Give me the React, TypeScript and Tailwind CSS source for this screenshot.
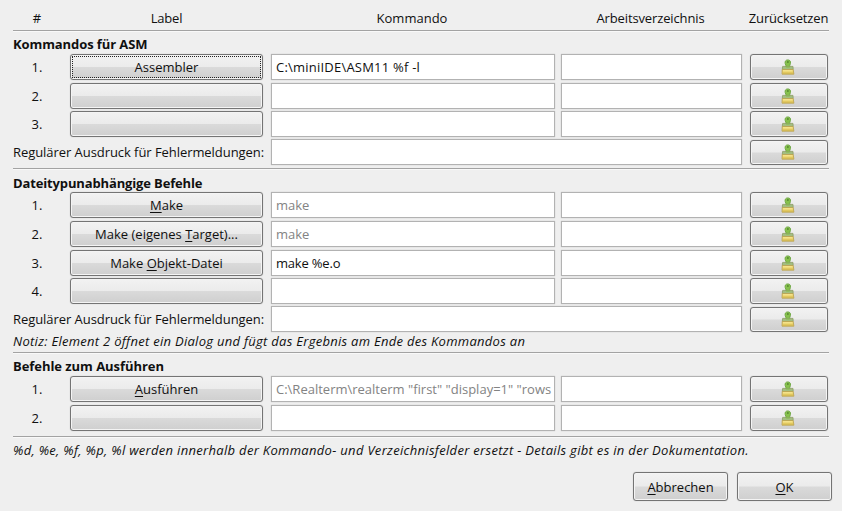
import React from 'react';

const BTN =
  'flex items-center justify-center rounded-[3px] border border-[#747474] bg-[linear-gradient(#f2f2f2_0%,#ebebeb_49%,#dadada_51%,#cfcfcf_100%)] shadow-[inset_0_0_0_1px_#f4f4f4,0_0_1px_#a8a8a8]';
const INPUT =
  'flex items-center overflow-hidden whitespace-nowrap border border-[#b2b2b2] bg-white pl-1 shadow-[0_0_1px_#c4c4c4]';

function Brush() {
  return (
    <svg className="mr-0.5" width="14" height="17" viewBox="0 0 14 17">
      <path d="M4.9 8.4V6.6L4.2 4.6C3.6 2.2 4.9 .9 6.8 .9S10 2.2 9.4 4.6L8.8 6.6V8.4Z" fill="#86c14c" stroke="#6ba53f" strokeWidth=".9" />
      <ellipse cx="6.9" cy="3" rx=".8" ry=".9" fill="#4d7d2c" />
      <path d="M1.6 7.4H12L12.2 10.5H1.3Z" fill="#a3bd80" stroke="#8d9c66" strokeWidth=".8" />
      <path d="M5.2 7.6H8.7V8.6H5.2Z" fill="#86c14c" />
      <path d="M1.2 10.6H12.2L12.9 15.2H1Z" fill="#e8cf67" stroke="#b9a04d" strokeWidth=".8" />
      <path d="M1.9 11.8H11.6" stroke="#f8e894" strokeWidth="1.2" />
      <path d="M2 14.2H12.2" stroke="#cdb04d" strokeWidth=".7" />
    </svg>
  );
}

/** Button caption; the character after "_" is the underlined mnemonic. */
function Caption({ text }: { text: string }) {
  const i = text.indexOf('_');
  if (i < 0) return <span>{text}</span>;
  return (
    <span className="whitespace-pre">
      {text.slice(0, i)}
      <span className="underline decoration-1 underline-offset-2">{text[i + 1]}</span>
      {text.slice(i + 2)}
    </span>
  );
}

type RowProps = { n: string; label?: string; cmd?: string; muted?: boolean; focus?: boolean; className?: string; cmdClass?: string };

function Row({ n, label = '', cmd = '', muted, focus, className = '', cmdClass = '' }: RowProps) {
  return (
    <div className={`flex h-[26px] shrink-0 ${className}`}>
      <div className="mr-[9px] flex w-12 items-center justify-center">{n}</div>
      <button className={`${BTN} w-[193px] p-px`}>
        <span className={`flex size-full items-center justify-center ${focus ? 'border border-dotted border-[#222]' : ''}`}>
          <Caption text={label} />
        </span>
      </button>
      <div className={`${INPUT} ml-2 w-[284px] ${muted ? 'text-[#838383]' : ''} ${cmdClass}`}>{cmd}</div>
      <div className={`${INPUT} ml-1.5 w-[181px]`} />
      <button className={`${BTN} ml-2 w-[78px]`}>
        <Brush />
      </button>
    </div>
  );
}

function RegexRow({ className }: { className: string }) {
  return (
    <div className={`flex h-[26px] shrink-0 items-center ${className}`}>
      <div className="w-[258px] whitespace-nowrap tracking-[-0.06px]">Regulärer Ausdruck für Fehlermeldungen:</div>
      <div className={`${INPUT} h-[26px] w-[471px]`} />
      <button className={`${BTN} ml-2 h-[25px] w-[78px]`}>
        <Brush />
      </button>
    </div>
  );
}

function Line({ className = '' }: { className?: string }) {
  return <div className={`h-0.5 w-[816px] shrink-0 border-b border-t border-b-[#f9f9f9] border-t-[#a3a3a3] ${className}`} />;
}

export default function App() {
  return (
    <div className="flex h-[511px] w-[842px] flex-col overflow-hidden bg-[#efefef] pl-[13px] font-['Open_Sans','Noto_Sans',sans-serif] text-[13px] leading-[18px] text-[#101010]">
      <div className="flex h-[30px] shrink-0 whitespace-nowrap pt-[9px] text-center">
        <div className="mr-[9px] w-12">#</div>
        <div className="w-[193px] tracking-[-0.2px]">Label</div>
        <div className="ml-2 w-[282px]">Kommando</div>
        <div className="ml-[7px] w-[181px] tracking-[-0.13px]">Arbeitsverzeichnis</div>
        <div className="ml-[7px] w-[81px] tracking-[-0.15px]">Zurücksetzen</div>
      </div>
      <Line />
      <div className="mt-[3px] h-[19px] shrink-0 font-bold tracking-[-0.09px]">Kommandos für ASM</div>
      <Row n="1." label="Assembler" cmd="C:\miniIDE\ASM11 %f -l" focus cmdClass="tracking-[0.22px]" />
      <Row n="2." className="mt-[3px]" />
      <Row n="3." className="mt-0.5" />
      <RegexRow className="mt-0.5" />
      <Line className="mt-[3px]" />
      <div className="mt-[4px] h-[18px] shrink-0 font-bold tracking-[-0.14px]">Dateitypunabhängige Befehle</div>
      <Row n="1." label="_Make" cmd="make" muted />
      <Row n="2." label="Make (eigenes _Target)..." cmd="make" muted className="mt-[3px]" />
      <Row n="3." label="Make _Objekt-Datei" cmd="make %e.o" className="mt-[3px]" cmdClass="tracking-[-0.2px]" />
      <Row n="4." className="mt-0.5" />
      <RegexRow className="mt-0.5" />
      <div className="h-[20px] shrink-0 whitespace-nowrap italic tracking-[0.28px]">
        Notiz: Element 2 öffnet ein Dialog und fügt das Ergebnis am Ende des Kommandos an
      </div>
      <Line />
      <div className="mt-[3px] h-[19px] shrink-0 font-bold tracking-[-0.05px]">Befehle zum Ausführen</div>
      <Row n="1." label="_Ausführen" cmd={'C:\\Realterm\\realterm "first" "display=1" "rows'} muted />
      <Row n="2." className="mt-[3px]" />
      <Line className="mt-[5px]" />
      <div className="mt-[3px] shrink-0 whitespace-nowrap italic tracking-[0.31px]">
        %d, %e, %f, %p, %l werden innerhalb der Kommando- und Verzeichnisfelder ersetzt - Details gibt es in der Dokumentation.
      </div>
      <div className="mt-[13px] flex justify-end gap-[9px] pr-[10px]">
        <button className={`${BTN} h-[29px] w-[95px]`}>
          <Caption text="_Abbrechen" />
        </button>
        <button className={`${BTN} h-[29px] w-[95px]`}>
          <Caption text="_OK" />
        </button>
      </div>
    </div>
  );
}
